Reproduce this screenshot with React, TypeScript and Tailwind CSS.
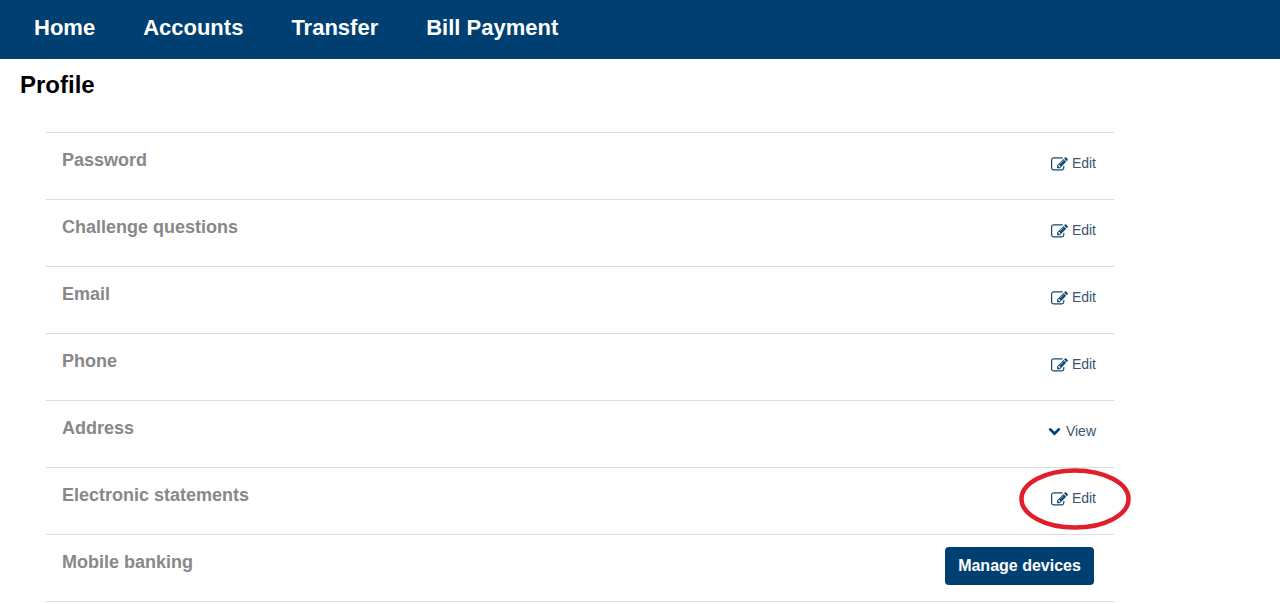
import React from 'react';

const navLinks = ['Home', 'Accounts', 'Transfer', 'Bill Payment'];

const rows = [
  { title: 'Password', action: 'edit' },
  { title: 'Challenge questions', action: 'edit' },
  { title: 'Email', action: 'edit' },
  { title: 'Phone', action: 'edit' },
  { title: 'Address', action: 'view' },
  { title: 'Electronic statements', action: 'edit', circled: true },
  { title: 'Mobile banking', action: 'manage' },
];

function EditIcon() {
  return (
    <svg className="mt-[2px] mr-[4px] text-[#14486f]" width="17" height="17" viewBox="0 0 1792 1792" fill="currentColor">
      <path d="M888 1184l116-116-152-152-116 116v56h96v96h56zm440-720q-16-16-33 1l-350 350q-17 17-1 33t33-1l350-350q17-17 1-33zm80 594v190q0 119-84.5 203.5t-203.5 84.5h-832q-119 0-203.5-84.5t-84.5-203.5v-832q0-119 84.5-203.5t203.5-84.5h832q63 0 117 25 15 7 18 23 3 17-9 29l-49 49q-14 14-32 8-23-6-45-6h-832q-66 0-113 47t-47 113v832q0 66 47 113t113 47h832q66 0 113-47t47-113v-126q0-13 9-22l64-64q15-15 35-7t20 29zm-96-738l288 288-672 672h-288v-288zm444 132l-92 92-288-288 92-92q28-28 68-28t68 28l152 152q28 28 28 68t-28 68z" />
    </svg>
  );
}

function ChevronIcon() {
  return (
    <svg className="mr-[5px] mb-[2px] text-[#003f72]" width="13" height="13" viewBox="0 0 1792 1792" fill="currentColor">
      <path d="M1683 808l-742 741q-19 19-45 19t-45-19l-742-741q-19-19-19-45.5t19-45.5l166-165q19-19 45-19t45 19l531 531 531-531q19-19 45-19t45 19l166 165q19 19 19 45.5t-19 45.5z" />
    </svg>
  );
}

export default function App() {
  return (
    <div className="h-[604px] overflow-hidden bg-white font-['Liberation_Sans',Arial,sans-serif]">
      <nav className="flex h-[59px] items-center gap-12 bg-[#003f72] pb-1 pl-[34px] text-[22px] font-bold text-white">
        {navLinks.map((link) => (
          <a key={link}>{link}</a>
        ))}
      </nav>

      <h1 className="mt-[12px] ml-5 text-[24px] leading-7 font-bold text-black">Profile</h1>

      <ul className="mt-[33px] ml-[46px] w-[1068px] border-b border-[#ddd]">
        {rows.map((row) => (
          <li key={row.title} className="relative flex h-[67px] justify-between border-t border-[#ddd] pr-[18px] pl-4">
            <span className="mt-[15px] text-[18px] leading-[24px] font-bold text-[#888]">{row.title}</span>

            {row.action === 'edit' && (
              <a className="mt-5 flex h-5 items-center text-[14px] text-[#3a5570]">
                <EditIcon />
                Edit
              </a>
            )}

            {row.action === 'view' && (
              <a className="mt-5 flex h-5 items-center text-[14px] text-[#3a5570]">
                <ChevronIcon />
                View
              </a>
            )}

            {row.action === 'manage' && (
              <button className="mt-3 mr-[2px] h-[38px] w-[149px] rounded bg-[#003f72] text-[16px] font-bold text-white">
                Manage devices
              </button>
            )}

            {row.circled && (
              <svg className="absolute top-0 left-[972px]" width="114" height="64" viewBox="0 0 114 64" fill="none">
                <ellipse cx="57" cy="31" rx="53.5" ry="28.5" stroke="#e01f2d" strokeWidth="4.5" />
              </svg>
            )}
          </li>
        ))}
      </ul>
    </div>
  );
}
